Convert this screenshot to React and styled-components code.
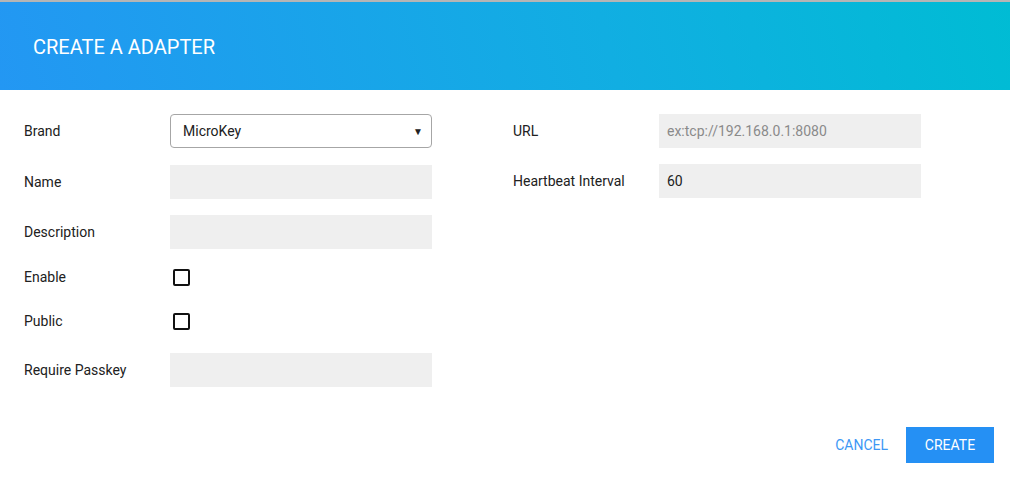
import React from "react";
import styled, { createGlobalStyle } from "styled-components";

const GlobalStyle = createGlobalStyle`
  html, body {
    margin: 0;
    padding: 0;
    background: #fff;
    font-family: Roboto, "Liberation Sans", Arial, sans-serif;
  }
  #root {
    height: 100vh;
  }
`;

const Dialog = styled.div`
  height: 100%;
  display: flex;
  flex-direction: column;
  box-sizing: border-box;
`;

const Header = styled.header`
  height: 88px;
  border-top: 2px solid #b5b5b5;
  background: linear-gradient(75deg, #2397f3 0%, #11aee2 60%, #00bcd4 100%);
  display: flex;
  align-items: center;
  padding-left: 33px;
`;

const Title = styled.h2`
  margin: 0;
  color: #fff;
  font-size: 20px;
  font-weight: 400;
  padding-top: 1px;
`;

const Body = styled.div`
  flex: 1;
  display: flex;
  padding: 24px 0 0 24px;
  gap: 81px;
`;

const Column = styled.div`
  display: flex;
  flex-direction: column;
`;

const Row = styled.div`
  display: grid;
  grid-template-columns: 146px 262px;
  align-items: center;
  height: 34px;
  margin-top: ${({ space }) => space || 0}px;
`;

const Label = styled.label`
  font-size: 14px;
  color: #212121;
`;

const TextInput = styled.input`
  box-sizing: border-box;
  height: 34px;
  width: 262px;
  border: none;
  outline: none;
  background: #efefef;
  padding: 0 8px;
  font-family: inherit;
  font-size: 14px;
  color: #212121;
  &::placeholder {
    color: #8a8a8a;
  }
`;

const Select = styled.div`
  box-sizing: border-box;
  height: 34px;
  width: 262px;
  border: 1px solid #a6a6a6;
  border-radius: 4px;
  display: flex;
  align-items: center;
  justify-content: space-between;
  padding: 0 8px 0 12px;
  font-size: 14px;
  color: #212121;
`;

const Caret = styled.span`
  font-size: 10px;
  color: #222;
`;

const Check = styled.input.attrs({ type: "checkbox" })`
  appearance: none;
  margin: 0 0 0 3px;
  width: 17px;
  height: 17px;
  border: 2px solid #111;
  border-radius: 2px;
  box-sizing: border-box;
  background: #fff;
`;

const Footer = styled.div`
  display: flex;
  justify-content: flex-end;
  align-items: center;
  gap: 2px;
  padding: 0 16px 16px 0;
`;

const Button = styled.button`
  height: 36px;
  min-width: 72px;
  padding: 0 16px;
  border: none;
  border-radius: 0;
  font-family: inherit;
  font-size: 14px;
  text-transform: uppercase;
  cursor: pointer;
  background: ${({ primary }) => (primary ? "#2590f4" : "transparent")};
  color: ${({ primary }) => (primary ? "#fff" : "#3d97f5")};
  width: ${({ primary }) => (primary ? "88px" : "auto")};
`;

const App = () => {
  return (
    <>
      <GlobalStyle />
      <Dialog>
        <Header>
          <Title>CREATE A ADAPTER</Title>
        </Header>
        <Body>
          <Column>
            <Row>
              <Label>Brand</Label>
              <Select>
                MicroKey
                <Caret>▼</Caret>
              </Select>
            </Row>
            <Row space={17}>
              <Label>Name</Label>
              <TextInput />
            </Row>
            <Row space={16}>
              <Label>Description</Label>
              <TextInput />
            </Row>
            <Row space={11}>
              <Label>Enable</Label>
              <Check />
            </Row>
            <Row space={10}>
              <Label>Public</Label>
              <Check />
            </Row>
            <Row space={15}>
              <Label>Require Passkey</Label>
              <TextInput />
            </Row>
          </Column>
          <Column>
            <Row>
              <Label>URL</Label>
              <TextInput placeholder="ex:tcp://192.168.0.1:8080" />
            </Row>
            <Row space={16}>
              <Label>Heartbeat Interval</Label>
              <TextInput defaultValue="60" />
            </Row>
          </Column>
        </Body>
        <Footer>
          <Button>Cancel</Button>
          <Button primary>Create</Button>
        </Footer>
      </Dialog>
    </>
  );
};

export default App;
